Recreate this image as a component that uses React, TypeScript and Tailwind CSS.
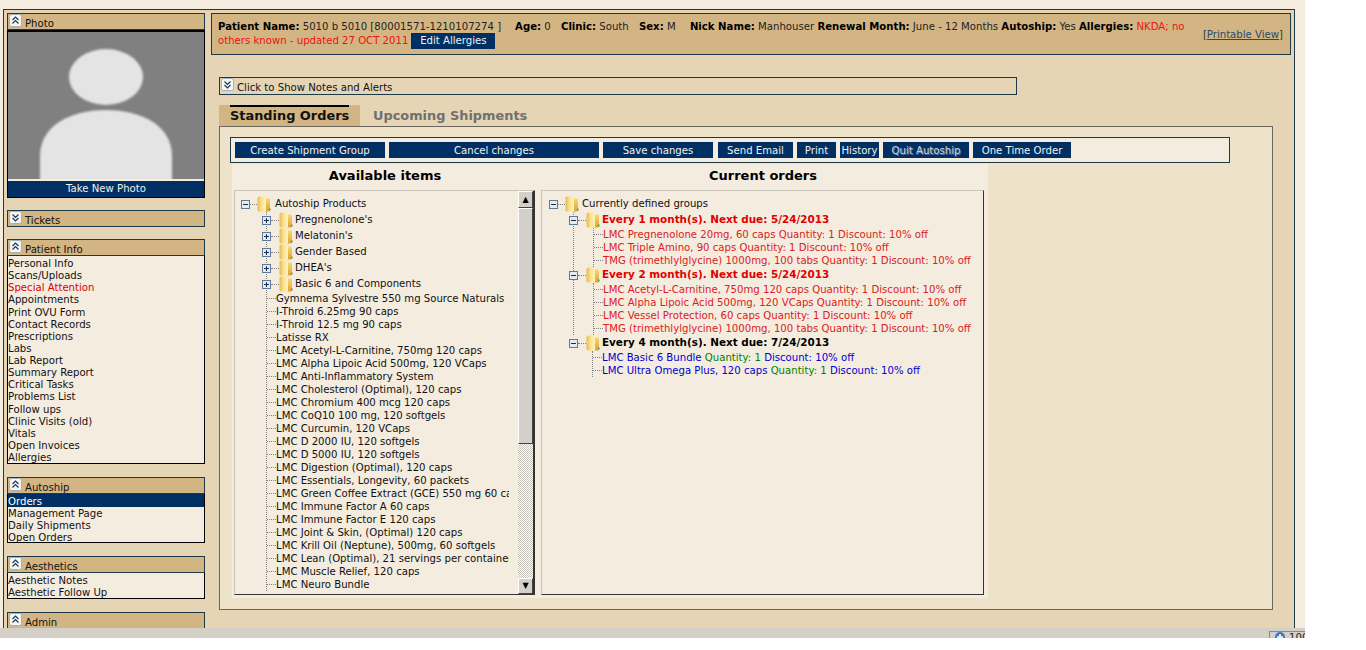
import type { ReactNode } from 'react';

const products = [
  'Gymnema Sylvestre 550 mg Source Naturals',
  'I-Throid 6.25mg 90 caps',
  'I-Throid 12.5 mg 90 caps',
  'Latisse RX',
  'LMC Acetyl-L-Carnitine, 750mg 120 caps',
  'LMC Alpha Lipoic Acid 500mg, 120 VCaps',
  'LMC Anti-Inflammatory System',
  'LMC Cholesterol (Optimal), 120 caps',
  'LMC Chromium 400 mcg 120 caps',
  'LMC CoQ10 100 mg, 120 softgels',
  'LMC Curcumin, 120 VCaps',
  'LMC D 2000 IU, 120 softgels',
  'LMC D 5000 IU, 120 softgels',
  'LMC Digestion (Optimal), 120 caps',
  'LMC Essentials, Longevity, 60 packets',
  'LMC Green Coffee Extract (GCE) 550 mg 60 caps',
  'LMC Immune Factor A 60 caps',
  'LMC Immune Factor E 120 caps',
  'LMC Joint & Skin, (Optimal) 120 caps',
  'LMC Krill Oil (Neptune), 500mg, 60 softgels',
  'LMC Lean (Optimal), 21 servings per container',
  'LMC Muscle Relief, 120 caps',
  'LMC Neuro Bundle',
];

const productFolders = ["Pregnenolone's", "Melatonin's", 'Gender Based', "DHEA's", 'Basic 6 and Components'];

const patientLinks = [
  'Personal Info', 'Scans/Uploads', 'Special Attention', 'Appointments', 'Print OVU Form', 'Contact Records',
  'Prescriptions', 'Labs', 'Lab Report', 'Summary Report', 'Critical Tasks', 'Problems List', 'Follow ups',
  'Clinic Visits (old)', 'Vitals', 'Open Invoices', 'Allergies',
];

const groups = [
  {
    title: 'Every 1 month(s). Next due: 5/24/2013',
    items: [
      'LMC Pregnenolone 20mg, 60 caps Quantity: 1 Discount: 10% off',
      'LMC Triple Amino, 90 caps Quantity: 1 Discount: 10% off',
      'TMG (trimethlylglycine) 1000mg, 100 tabs Quantity: 1 Discount: 10% off',
    ],
  },
  {
    title: 'Every 2 month(s). Next due: 5/24/2013',
    items: [
      'LMC Acetyl-L-Carnitine, 750mg 120 caps Quantity: 1 Discount: 10% off',
      'LMC Alpha Lipoic Acid 500mg, 120 VCaps Quantity: 1 Discount: 10% off',
      'LMC Vessel Protection, 60 caps Quantity: 1 Discount: 10% off',
      'TMG (trimethlylglycine) 1000mg, 100 tabs Quantity: 1 Discount: 10% off',
    ],
  },
];

const blueItems = ['LMC Basic 6 Bundle', 'LMC Ultra Omega Plus, 120 caps'];

function Toggle({ open }: { open: boolean }) {
  return (
    <svg width="13" height="13" viewBox="0 0 13 13" className="shrink-0">
      <rect x="0.5" y="0.5" width="12" height="12" rx="2" fill="#f4f6f8" stroke="#9fb0c0" />
      <path
        d={open ? 'M3.5 6 6.5 3 9.5 6M3.5 9.5 6.5 6.5 9.5 9.5' : 'M3.5 3.5 6.5 6.5 9.5 3.5M3.5 7 6.5 10 9.5 7'}
        fill="none"
        stroke="#24384a"
        strokeWidth="1.2"
      />
    </svg>
  );
}

function Expander({ plus }: { plus?: boolean }) {
  return (
    <svg width="9" height="9" viewBox="0 0 9 9" className="shrink-0">
      <rect x="0.5" y="0.5" width="8" height="8" fill="#e4ebf3" stroke="#5f7a98" />
      <path d={plus ? 'M2 4.5h5M4.5 2v5' : 'M2 4.5h5'} stroke="#1c2c44" strokeWidth="1" />
    </svg>
  );
}

function Folder() {
  return (
    <svg width="14" height="16" viewBox="0 0 14 16" className="shrink-0">
      <defs>
        <linearGradient id="folderBack" x1="0" x2="1" y1="0" y2="0">
          <stop offset="0" stopColor="#e9b84e" />
          <stop offset="0.45" stopColor="#fbe08c" />
          <stop offset="1" stopColor="#fff3c0" />
        </linearGradient>
        <linearGradient id="folderSide" x1="0" x2="0" y1="0" y2="1">
          <stop offset="0" stopColor="#f8d773" />
          <stop offset="1" stopColor="#dfa32e" />
        </linearGradient>
      </defs>
      <path d="M8 2.5 L11.5 2.5 Q13 2.5 13 4 L13 14 Q13 15.5 11.5 15.5 L8 15.5Z" fill="url(#folderSide)" />
      <path d="M0.5 2 Q0.5 0.5 2.5 0.5 L7 0.5 Q9 0.5 9 2.5 L9 15.5 L2.5 15.5 Q0.5 15.5 0.5 14Z" fill="url(#folderBack)" />
      <rect x="12" y="12.5" width="1.5" height="2" fill="#4f9a4a" />
    </svg>
  );
}

function Dash({ width }: { width: string }) {
  return <span className={`${width} shrink-0 border-t border-dotted border-[#808080]`} />;
}

function PanelHeader({ title, open = true }: { title: string; open?: boolean }) {
  return (
    <div className="h-[17px] border border-[#1d3a47] bg-[#d3b583] flex items-start gap-[3px] pl-[1px] text-[#111]">
      <Toggle open={open} />
      <span className="pt-[3px] leading-[14px]">{title}</span>
    </div>
  );
}

function SideLinks({ height, rows = 'leading-[12px]', children }: { height: string; rows?: string; children: ReactNode }) {
  return <div className={`${height} ${rows} border border-t-0 border-black bg-[#f4ecdf] pt-[2px] text-[#111]`}>{children}</div>;
}

function ToolButton({ width, children, ghost }: { width: string; children: ReactNode; ghost?: boolean }) {
  return (
    <button
      className={`${width} h-[16px] shrink-0 bg-[#003063] pt-[1px] leading-[16px] text-center ${
        ghost ? 'text-[#c9d2da] [text-shadow:1px_1px_0_#5f7c98]' : 'text-[#f0f0f0]'
      }`}
    >
      {children}
    </button>
  );
}

function PhotoPlaceholder() {
  return (
    <svg width="196" height="147" viewBox="0 0 196 147" className="block">
      <defs>
        <filter id="soft">
          <feGaussianBlur stdDeviation="1.2" />
        </filter>
      </defs>
      <rect width="196" height="147" fill="#808080" />
      <g fill="#e4e4e4" filter="url(#soft)">
        <ellipse cx="98" cy="45" rx="37" ry="28" />
        <path d="M32 150 L32 124 C32 94 62 78 98 78 C134 78 164 94 164 124 L164 150Z" />
      </g>
    </svg>
  );
}

export default function App() {
  return (
    <div className="w-[1305px] h-[638px] flex flex-col bg-[#f4ecdf] text-[10.13px] font-['DejaVu_Sans',sans-serif] overflow-hidden">
      <div className="pl-[3px] pr-[10px] pt-[9px] h-[628px] overflow-hidden">
        <div className="h-[700px] border border-[#1d3a47] bg-[#e6d5b5] pl-[3px] pr-[2px] pt-[3px] flex gap-[6px]">
          {/* Left menu column */}
          <aside className="w-[198px] shrink-0 flex flex-col">
            <PanelHeader title="Photo" />
            <div className="border border-black border-t-2 bg-[#f4ecdf]">
              <PhotoPlaceholder />
              <div className="mt-[2px] h-[16px] bg-[#003063] text-[#f0f0f0] text-center leading-[16px]">Take New Photo</div>
            </div>

            <div className="mt-[12px]">
              <PanelHeader title="Tickets" open={false} />
            </div>

            <div className="mt-[12px]">
              <PanelHeader title="Patient Info" />
              <SideLinks height="h-[208px]" rows="leading-[12.13px]">
                {patientLinks.map((link) => (
                  <div key={link} className={link === 'Special Attention' ? 'text-[#e00000]' : ''}>
                    {link}
                  </div>
                ))}
              </SideLinks>
            </div>

            <div className="mt-[13px]">
              <PanelHeader title="Autoship" />
              <SideLinks height="h-[49px]">
                <div className="-mt-[2px] mb-[1px] h-[13px] pt-[2px] bg-[#003063] text-white">Orders</div>
                <div>Management Page</div>
                <div>Daily Shipments</div>
                <div>Open Orders</div>
              </SideLinks>
            </div>

            <div className="mt-[13px]">
              <PanelHeader title="Aesthetics" />
              <SideLinks height="h-[26px]">
                <div>Aesthetic Notes</div>
                <div>Aesthetic Follow Up</div>
              </SideLinks>
            </div>

            <div className="mt-[13px]">
              <PanelHeader title="Admin" />
            </div>
          </aside>

          {/* Main column */}
          <main className="w-[1080px] shrink-0">
            <div className="h-[42px] border border-[#1d3a47] bg-[#d3b583] pl-[6px] pr-[7px] pt-[6px] flex text-[#222]">
              <div className="w-[978px] leading-[14px]">
                <b className="text-black">Patient Name:</b> 5010 b 5010 [80001571-1210107274 ]
                <b className="text-black ml-[14px]">Age:</b> 0 <b className="text-black ml-[7px]">Clinic:</b> South{' '}
                <b className="text-black ml-[7px]">Sex:</b> M <b className="text-black ml-[11px]">Nick Name:</b> Manhouser{' '}
                <b className="text-black">Renewal Month:</b> June - 12 Months <b className="text-black">Autoship:</b> Yes{' '}
                <b className="text-black">Allergies:</b> <span className="text-[#f01010]">NKDA; no others known - updated 27 OCT 2011</span>
                <button className="ml-[3px] w-[84px] h-[16px] -translate-y-[1px] bg-[#003063] text-[#f0f0f0] leading-[16px] align-top">Edit Allergies</button>
              </div>
              <div className="ml-auto pt-[8px] leading-[14px] whitespace-nowrap text-[#333]">
                [<span className="underline text-[#2a4a6a]">Printable View</span>]
              </div>
            </div>

            <div className="ml-[8px] mt-[22px] w-[798px] h-[18px] border border-[#1d3a47] flex items-start gap-[3px] pl-[1px] text-[#111]">
              <Toggle open={false} />
              <span className="pt-[3px] leading-[14px]">Click to Show Notes and Alerts</span>
            </div>

            <div className="ml-[8px] mt-[10px] flex h-[21px] items-stretch text-[12.9px] font-bold">
              <div className="w-[141px] bg-[#d3b583] pl-[11px]">
                <div className="w-[119px] border-t-2 border-black leading-[18px] text-[#111] whitespace-nowrap">Standing Orders</div>
              </div>
              <div className="ml-[13px] pt-[2px] leading-[18px] text-[#707070]">Upcoming Shipments</div>
            </div>

            <section className="ml-[8px] w-[1054px] h-[484px] border border-[#6b675c] bg-[#efe2cb] pl-[10px] pt-[10px]">
              <div className="w-[1000px] h-[26px] border border-[#1d3a47] bg-[#f4ecdf] flex items-center gap-[4px] pl-[4px]">
                <ToolButton width="w-[150px]">Create Shipment Group</ToolButton>
                <ToolButton width="w-[210px]">Cancel changes</ToolButton>
                <ToolButton width="w-[110px]">Save changes</ToolButton>
                <ToolButton width="w-[75px] ml-[1px]">Send Email</ToolButton>
                <ToolButton width="w-[39px]">Print</ToolButton>
                <ToolButton width="w-[39px]">History</ToolButton>
                <ToolButton width="w-[86px]" ghost>
                  Quit Autoship
                </ToolButton>
                <ToolButton width="w-[98px]">One Time Order</ToolButton>
              </div>

              <div className="ml-[2px] mt-[1px] w-[756px] h-[434px] bg-[#f4ecdf] text-[#111]">
                <div className="flex h-[26px] items-center pb-[2px] text-[13px] font-bold text-black">
                  <div className="w-[306px] text-center">Available items</div>
                  <div className="w-[450px] text-center">Current orders</div>
                </div>

                <div className="flex gap-[6px] pl-[2px]">
                  {/* Available items tree */}
                  <div className="w-[301px] h-[405px] border border-[#c9c5b8] border-r-[#333] border-b-[#333] flex">
                    <div className="w-[274px] overflow-hidden pl-[6px] pt-[5px]">
                      <div className="h-[16px] flex items-center">
                        <Expander />
                        <Dash width="w-[7px]" />
                        <Folder />
                        <span className="ml-[4px]">Autoship Products</span>
                      </div>
                      <div className="ml-[25px] border-l border-dotted border-[#808080]">
                        {productFolders.map((name) => (
                          <div key={name} className="h-[16px] flex items-center -ml-[5px]">
                            <Expander plus />
                            <Dash width="w-[8px]" />
                            <Folder />
                            <span className="ml-[2px] whitespace-nowrap">{name}</span>
                          </div>
                        ))}
                        {products.map((name) => (
                          <div key={name} className="h-[13px] flex items-center">
                            <Dash width="w-[9px]" />
                            <span className="whitespace-nowrap">{name}</span>
                          </div>
                        ))}
                      </div>
                    </div>
                    <div className="ml-auto w-[16px] flex flex-col bg-[repeating-conic-gradient(#c8c4bc_0_25%,#ffffff_0_50%)] bg-[length:2px_2px] border-r border-[#333]">
                      <div className="h-[17px] bg-[#d4d0c8] border border-white border-r-[#444] border-b-[#444] flex items-center justify-center text-[8px] leading-none text-black">▲</div>
                      <div className="h-[236px] bg-[#d4d0c8] border border-white border-r-[#444] border-b-[#444]" />
                      <div className="mt-auto h-[16px] bg-[#d4d0c8] border border-white border-r-[#444] border-b-[#444] flex items-center justify-center text-[8px] leading-none text-black">▼</div>
                    </div>
                  </div>

                  {/* Current orders tree */}
                  <div className="w-[443px] h-[405px] border border-[#c9c5b8] border-r-[#333] border-b-[#333] pl-[7px] pt-[5px]">
                    <div className="h-[16px] flex items-center">
                      <Expander />
                      <Dash width="w-[7px]" />
                      <Folder />
                      <span className="ml-[3px]">Currently defined groups</span>
                    </div>
                    <div className="ml-[24px] border-l border-dotted border-[#808080]">
                      {groups.map((group) => (
                        <div key={group.title}>
                          <div className="h-[16px] flex items-center -ml-[5px]">
                            <Expander />
                            <Dash width="w-[8px]" />
                            <Folder />
                            <b className="ml-[2px] text-[10.4px] text-[#e00000]">{group.title}</b>
                          </div>
                          <div className="ml-[19px] border-l border-dotted border-[#808080]">
                            {group.items.map((item) => (
                              <div key={item} className="h-[13px] flex items-center text-[#dc2020]">
                                <Dash width="w-[9px]" />
                                <span className="whitespace-nowrap">{item}</span>
                              </div>
                            ))}
                          </div>
                        </div>
                      ))}
                    </div>
                    <div className="ml-[25px]">
                      <div className="h-[16px] flex items-center -ml-[5px]">
                        <Expander />
                        <Dash width="w-[8px]" />
                        <Folder />
                        <b className="ml-[2px] text-[10.4px] text-black">Every 4 month(s). Next due: 7/24/2013</b>
                      </div>
                      <div className="ml-[18px] border-l border-dotted border-[#808080]">
                        {blueItems.map((item) => (
                          <div key={item} className="h-[13px] flex items-center text-[#0000d0]">
                            <Dash width="w-[9px]" />
                            <span className="whitespace-nowrap">
                              {item} <span className="text-[#008000]">Quantity: 1</span> Discount: 10% off
                            </span>
                          </div>
                        ))}
                      </div>
                    </div>
                  </div>
                </div>
              </div>
            </section>
          </main>
        </div>
      </div>

      {/* Browser status bar */}
      <div className="h-[10px] bg-[#d4d0c8] flex justify-end overflow-hidden">
        <div className="mt-[3px] w-[36px] h-[20px] border-l border-t border-[#8a8a80] flex items-start gap-[4px] pl-[5px] leading-[12px] text-[#222]">
          <svg width="10" height="10" viewBox="0 0 10 10" className="shrink-0">
            <circle cx="5" cy="5" r="5" fill="#3f78c8" />
            <path d="M2 5h6M5 2v6" stroke="#ffffff" strokeWidth="1.5" />
          </svg>
          <span>100%</span>
        </div>
      </div>
    </div>
  );
}
